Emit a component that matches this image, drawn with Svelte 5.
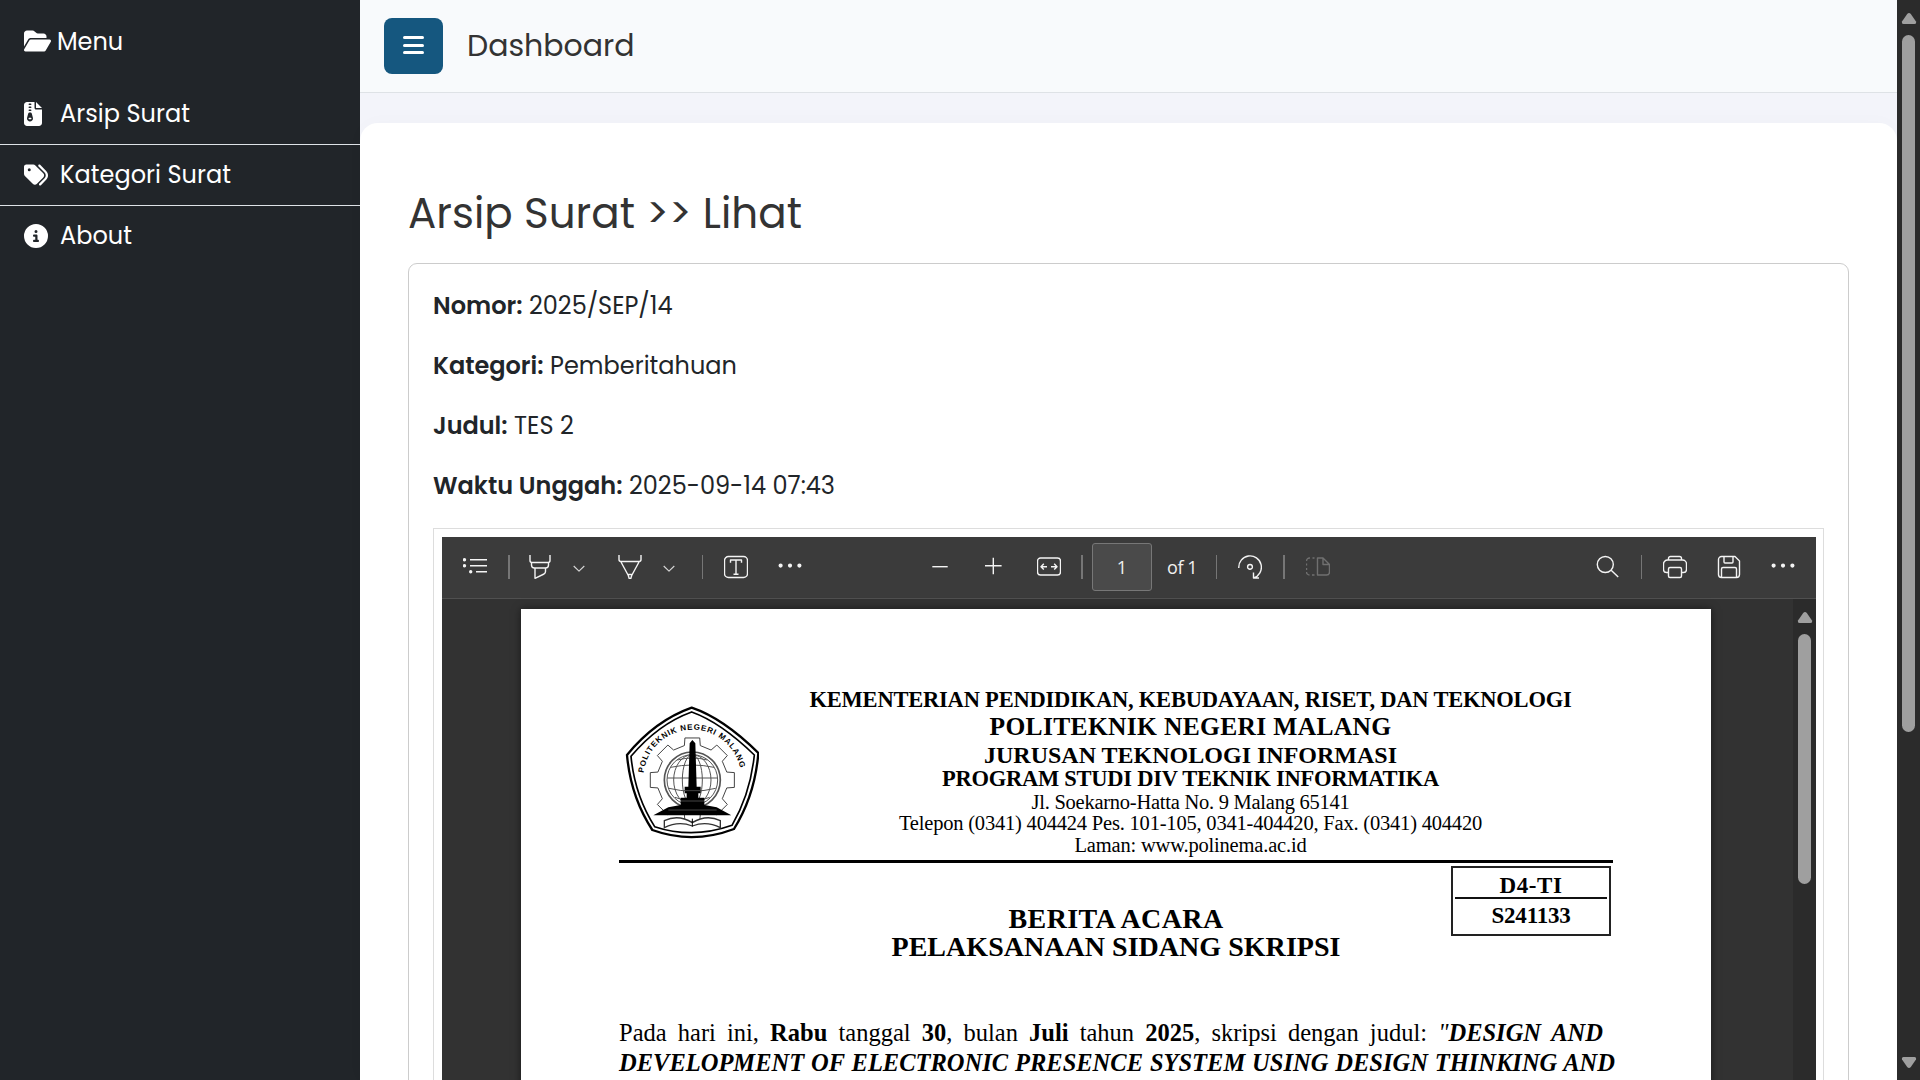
<script>
  // Spreads a line of text over a set width, between letters or between words.
  function fit(node, { width, words = false }) {
    const natural = node.getBoundingClientRect().width;
    const text = node.textContent;
    const slots = words ? text.split(' ').length - 1 : text.length;
    const extra = (width - natural) / slots;
    node.style[words ? 'wordSpacing' : 'letterSpacing'] = `${extra}px`;
  }

  const menu = [
    { label: 'Arsip Surat', width: 130, box: '0 0 384 512', w: 18,
      d: 'M64 0C28.7 0 0 28.7 0 64V448c0 35.3 28.7 64 64 64H320c35.3 0 64-28.7 64-64V160H256c-17.7 0-32-14.3-32-32V0H64zM256 0V128H384L256 0zM96 48c0-8.8 7.2-16 16-16h32c8.8 0 16 7.2 16 16s-7.2 16-16 16H112c-8.8 0-16-7.2-16-16zm0 64c0-8.8 7.2-16 16-16h32c8.8 0 16 7.2 16 16s-7.2 16-16 16H112c-8.8 0-16-7.2-16-16zm0 64c0-8.8 7.2-16 16-16h32c8.8 0 16 7.2 16 16s-7.2 16-16 16H112c-8.8 0-16-7.2-16-16zm-6.3 71.8c3.7-14 16.4-23.8 30.9-23.8h14.8c14.5 0 27.2 9.7 30.9 23.8l23.5 88.2c1.4 5.4 2.1 10.9 2.1 16.4c0 35.2-28.8 63.7-64 63.7s-64-28.5-64-63.7c0-5.5 .7-11.1 2.1-16.4l23.5-88.2zM112 336c-8.8 0-16 7.2-16 16s7.2 16 16 16h32c8.8 0 16-7.2 16-16s-7.2-16-16-16H112z' },
    { label: 'Kategori Surat', width: 171, box: '0 0 512 512', w: 24,
      d: 'M345 39.1L472.8 168.4c52.4 53 52.4 138.2 0 191.2L360.8 472.9c-9.3 9.4-24.5 9.5-33.9 .2s-9.5-24.5-.2-33.9L438.6 325.9c33.9-34.3 33.9-89.4 0-123.7L310.9 72.9c-9.3-9.4-9.2-24.6 .2-33.9s24.6-9.2 33.9 .2zM0 229.5V80C0 53.5 21.5 32 48 32H197.5c17 0 33.3 6.7 45.3 18.7l168 168c25 25 25 65.5 0 90.5L277.3 442.7c-25 25-65.5 25-90.5 0l-168-168C6.7 262.7 0 246.5 0 229.5zM144 144a32 32 0 1 0-64 0 32 32 0 1 0 64 0z' },
    { label: 'About', width: 72, box: '0 0 512 512', w: 24,
      d: 'M256 512A256 256 0 1 0 256 0a256 256 0 1 0 0 512zM216 336h24V272H216c-13.3 0-24-10.7-24-24s10.7-24 24-24h48c13.3 0 24 10.7 24 24v88h8c13.3 0 24 10.7 24 24s-10.7 24-24 24H216c-13.3 0-24-10.7-24-24s10.7-24 24-24zm40-208a32 32 0 1 1 0 64 32 32 0 1 1 0-64z' },
  ];

  const details = [
    { key: 'Nomor:', kw: 89.5, value: '2025/SEP/14', vw: 143.5 },
    { key: 'Kategori:', kw: 110.5, value: 'Pemberitahuan', vw: 187 },
    { key: 'Judul:', kw: 74.5, value: 'TES 2', vw: 60 },
    { key: 'Waktu Unggah:', kw: 189.5, value: '2025-09-14 07:43', vw: 206 },
  ];

  const dots = 'M2.600 10.6h.01M12 10.6h.01M21.400 10.6h.01';
  const chevron = 'M.7 11l5.3 5.2 5.3-5.2';
  // Each tool: its left gap, then an outline icon on a grid 24 units high.
  const tools = [
    { gap: 21, d: 'M7 4.7h17M7 10.8h17M13 16.8h11', dot: 'M1.5 4.7h.01M1.5 10.8h.01M7.7 16.8h.01' },
    { gap: 21, sep: 2 },
    { gap: 18, d: 'M2 0v5.5q0 2 2 2h16q2 0 2-2V0M3.5 8v2q0 3 3 3h11q3 0 3-3V8M7 13v10.3l9-4.3q1.5-1 1.5-2.5V13' },
    { gap: 21, w: 12, thin: true, d: chevron },
    { gap: 33, d: 'M1 0v4.5q0 2 2 2h18q2 0 2-2V0M3 7l7.3 13.5L11.2 23.5h1.6l.9-3L21 7M10.3 19.5h3.4' },
    { gap: 21, w: 12, thin: true, d: chevron },
    { gap: 27, sep: 1 },
    { gap: 21, d: 'M4.5 1.5h15a4 4 0 0 1 4 4v13a4 4 0 0 1-4 4h-15a4 4 0 0 1-4-4v-13a4 4 0 0 1 4-4zM6.5 7.8V5h11v2.8M12 5v14.2M9.5 19.2h5' },
    { gap: 30, dot: dots, big: true },
    { gap: 126, d: 'M4.3 11.7h15.4' },
    { gap: 29, d: 'M4 10.8h16.6M12.3 2.8v16.4' },
    { gap: 31.5, d: 'M3.5 3h17a3 3 0 0 1 3 3v11a3 3 0 0 1-3 3h-17a3 3 0 0 1-3-3V6a3 3 0 0 1 3-3zM4 11.7h6M14 11.7h6M6.8 8.8L4 11.7l2.8 2.9M17.2 8.8l2.8 2.9-2.8 2.9' },
    { gap: 20.5, sep: 2 },
    { gap: 9, input: true },
    { gap: 15, total: true },
    { gap: 19, sep: 1 },
    { gap: 21, d: 'M.8 13A11.3 11.3 0 1 1 15.5 23M15.5 17.5V23H21M12 9.5a2.4 2.4 0 1 1 0 4.8 2.4 2.4 0 1 1 0-4.8' },
    { gap: 21, sep: 2 },
    { gap: 21, dim: true, d: 'M11.5 3h5.5l6.5 6.5V17a3 3 0 0 1-3 3h-9zM17 3v6.5h6.5M8.5 3h-2M4 3H3.500A3 3 0 0 0 .5 6M.5 8.500v2M.5 13v2M.5 17a3 3 0 0 0 3 3M6 20h2.500' },
    { gap: 266, d: 'M9.300 1.500a8 8 0 1 1 0 16 8 8 0 1 1 0-16zM15.200 15.200l7 6.900' },
    { gap: 21, sep: 1 },
    { gap: 21, d: 'M5.500 17.500H3.500a3 3 0 0 1-3-3V9a4 4 0 0 1 4-4h15a4 4 0 0 1 4 4v5.500a3 3 0 0 1-3 3h-2M5.500 5V3.500a2 2 0 0 1 2-2h9a2 2 0 0 1 2 2V5M7 12.500h10a1.500 1.500 0 0 1 1.500 1.500v7a1.500 1.500 0 0 1-1.500 1.500H7A1.500 1.500 0 0 1 5.500 21v-7A1.500 1.500 0 0 1 7 12.500z' },
    { gap: 30, d: 'M4.500 1.500H18L22.500 6v13.500a3 3 0 0 1-3 3h-15a3 3 0 0 1-3-3v-15a3 3 0 0 1 3-3zM7 1.500V7q0 1 1 1h7q1 0 1-1V1.500M4.500 22.500V14q0-1.500 1.500-1.500h12q1.500 0 1.500 1.500v8.500' },
    { gap: 30, dot: dots, big: true },
  ];

  const letterhead = [
    { text: 'KEMENTERIAN PENDIDIKAN, KEBUDAYAAN, RISET, DAN TEKNOLOGI', width: 762, cls: 'l1' },
    { text: 'POLITEKNIK NEGERI MALANG', width: 402, cls: 'l2' },
    { text: 'JURUSAN TEKNOLOGI INFORMASI', width: 413, cls: 'l3' },
    { text: 'PROGRAM STUDI DIV TEKNIK INFORMATIKA', width: 497, cls: 'l4' },
    { text: 'Jl. Soekarno-Hatta No. 9 Malang 65141', width: 318, cls: 'l5' },
    { text: 'Telepon (0341) 404424 Pes. 101-105, 0341-404420, Fax. (0341) 404420', width: 583, cls: 'l6' },
    { text: 'Laman: www.polinema.ac.id', width: 232, cls: 'l6' },
  ];

  // Cog outline with eight teeth behind the globe of the crest.
  const cog = Array.from({ length: 8 }, (_, i) => {
    const at = (deg, r) => {
      const a = ((i * 45 + deg) * Math.PI) / 180;
      return `${(277 + r * Math.cos(a)).toFixed(1)} ${(300 + r * Math.sin(a)).toFixed(1)}`;
    };
    return `${i ? 'L' : 'M'}${at(-13, 106)}L${at(-10, 128)}L${at(10, 128)}L${at(13, 106)}`;
  }).join('') + 'Z';
</script>

<div class="app">
  <aside>
    <div class="brand">
      <svg width="27" height="24" viewBox="0 0 576 512"><path d="M88.700 223.800L0 375.800V96C0 60.700 28.700 32 64 32H181.500c17 0 33.300 6.700 45.300 18.700l26.500 26.500c12 12 28.300 18.700 45.300 18.700H416c35.300 0 64 28.700 64 64v32H144c-22.800 0-43.800 12.100-55.300 31.800zm27.600 16.100C122.100 230 132.600 224 144 224H544c11.500 0 22 6.100 27.700 16.100s5.700 22.200-.1 32.100l-112 192C453.900 474 443.400 480 432 480H32c-11.500 0-22-6.100-27.700-16.100s-5.700-22.200 .1-32.100l112-192z" /></svg>
      <span class="fit" use:fit={{ width: 66 }}>Menu</span>
    </div>
    <nav>
      {#each menu as item}
        <a href="#top">
          <span class="ico"><svg width={item.w} height="24" viewBox={item.box}><path d={item.d} /></svg></span>
          <span class="fit" use:fit={{ width: item.width }}>{item.label}</span>
        </a>
      {/each}
    </nav>
  </aside>

  <main>
    <header>
      <button aria-label="Toggle menu"><i></i><i></i><i></i></button>
      <span class="fit" use:fit={{ width: 167.5 }}>Dashboard</span>
    </header>
    <section class="panel">
      <h1><span class="fit" use:fit={{ width: 394 }}>Arsip Surat &gt;&gt; Lihat</span></h1>
      <div class="card">
        {#each details as row}
          <p><b class="fit" use:fit={{ width: row.kw }}>{row.key}</b><span class="fit" use:fit={{ width: row.vw }}>{row.value}</span></p>
        {/each}
        <div class="frame">
          <div class="toolbar">
            {#each tools as t}
              <div class="tool" class:dim={t.dim} class:thin={t.thin} style:margin-left="{t.gap}px">
                {#if t.sep}
                  <i class="sep" style:width="{t.sep}px"></i>
                {:else if t.input}
                  <span class="page-no">1</span>
                {:else if t.total}
                  <span class="total">of 1</span>
                {:else}
                  <svg width={t.w ?? 24} height="24" viewBox="0 0 {t.w ?? 24} 24">
                    {#if t.d}<path d={t.d} />{/if}
                    {#if t.dot}<path class="dot" class:big={t.big} d={t.dot} />{/if}
                  </svg>
                {/if}
              </div>
            {/each}
          </div>
          <div class="viewer">
            <article>
              <div class="head">
                <svg class="crest" width="134" height="134" viewBox="75 78 402 402">
                  <g fill="none" stroke="#000">
                    <path stroke-width="7" d="M275 83Q370 115 475 219Q465 345 402 447Q278 494 157 450Q92 350 81 225Q165 122 275 83Z" />
                    <path stroke-width="5" d="M275 96Q362 127 463 225Q451 342 396 436Q278 478 164 440Q104 345 93 229Q175 132 275 96Z" />
                    <path stroke="#444" stroke-width="3" d={cog} />
                    <g stroke="#555" stroke-width="3">
                      <circle cx="277" cy="300" r="84" stroke-width="5" />
                      <circle cx="277" cy="300" r="76" />
                      <ellipse cx="277" cy="300" rx="30" ry="76" /><ellipse cx="277" cy="300" rx="56" ry="76" />
                      <path d="M212 262Q277 248 342 262M202 294H352M207 325Q277 342 347 325M225 352Q277 374 329 352M232 240Q277 228 322 240" />
                    </g>
                    <path id="crest-arc" stroke="none" d="M131 279A147 147 0 0 1 423 279" />
                  </g>
                  <path d="M269 190L277 180L286 190L290 320H302V340H295V353H313V375L350 382L394 406H160L205 382L242 375V353H260V340H254V320H265Z" />
                  <path fill="#fff" stroke="#333" stroke-width="4" d="M193 443V422Q235 402 277 428Q320 402 361 422V443Q320 422 277 438Q235 422 193 443Z" />
                  <path stroke="#000" stroke-width="3" d="M277 416V440" />
                  <path stroke="#666" stroke-width="2" d="M242 363H313M254 332H302M205 390H350" />
                  <text><textPath href="#crest-arc" textLength="412">POLITEKNIK NEGERI MALANG</textPath></text>
                </svg>
                <div class="lines">
                  {#each letterhead as l}
                    <div class={l.cls}><span class="fit" use:fit={{ width: l.width }}>{l.text}</span></div>
                  {/each}
                </div>
              </div>
              <div class="rule"></div>
              <div class="title">
                <div class="names">
                  <div><span class="fit" use:fit={{ width: 215 }}>BERITA ACARA</span></div>
                  <div><span class="fit" use:fit={{ width: 449 }}>PELAKSANAAN SIDANG SKRIPSI</span></div>
                </div>
                <div class="stamp">
                  <div class="code"><span class="fit" use:fit={{ width: 63 }}>D4-TI</span></div>
                  <div class="num"><span class="fit" use:fit={{ width: 79 }}>S241133</span></div>
                </div>
              </div>
              <div class="body">
                <div><span class="fit line" use:fit={{ width: 984, words: true }}>Pada hari ini, <b>Rabu</b> tanggal <b>30</b>, bulan <b>Juli</b> tahun <b>2025</b>, skripsi dengan judul: <em>"</em><b><em>DESIGN AND</em></b></span></div>
                <div><span class="fit" use:fit={{ width: 996, words: true }}><b><em>DEVELOPMENT OF ELECTRONIC PRESENCE SYSTEM USING DESIGN THINKING AND</em></b></span></div>
              </div>
            </article>
            <div class="bar inner">
              <svg width="16" height="11" viewBox="0 0 16 11"><path d="M8 0Q9 0 9.800 1L15 8.500Q15.500 11 13.500 11H2.500Q.5 11 1 8.500L6.200 1Q7 0 8 0Z" /></svg>
              <i></i>
            </div>
          </div>
        </div>
      </div>
    </section>
  </main>

  <div class="bar outer">
    <svg width="16" height="11" viewBox="0 0 16 11"><path d="M8 0Q9 0 9.800 1L15 8.500Q15.500 11 13.500 11H2.500Q.5 11 1 8.500L6.200 1Q7 0 8 0Z" /></svg>
    <i></i>
    <svg class="down" width="16" height="11" viewBox="0 0 16 11"><path d="M8 0Q9 0 9.800 1L15 8.500Q15.500 11 13.500 11H2.500Q.5 11 1 8.500L6.200 1Q7 0 8 0Z" /></svg>
  </div>
</div>

<style>
  :global(body) { margin: 0; overflow: hidden; }
  .app { display: flex; width: 1920px; height: 1080px; overflow: hidden; background: #f3f4fa; font: 24px/36px Poppins, Inter, sans-serif; color: #212529; }
  .fit { display: inline-block; white-space: nowrap; }
  svg { display: block; flex: none; }

  aside { width: 360px; flex: none; background: #212529; color: #fff; }
  aside svg { fill: #fff; }
  .brand { display: flex; align-items: flex-start; gap: 6px; height: 83px; padding: 24px 24px 0; box-sizing: border-box; }
  .brand svg { margin-top: 5px; }
  nav a { display: flex; align-items: center; height: 60px; padding: 0 24px; color: #fff; text-decoration: none; border-bottom: 1px solid #dee2e6; }
  nav a:first-child { padding-top: 1px; }
  nav a:last-child { border-bottom: 0; }
  nav svg { position: relative; top: -0.500px; }
  .ico { width: 36px; }

  main { flex: 1; min-width: 0; display: flex; flex-direction: column; }
  header { display: flex; align-items: center; gap: 24px; height: 92px; flex: none; padding-left: 24px; background: #f8fafc; border-bottom: 1px solid #dee2e6; font-size: 30px; color: #333; }
  button { display: flex; flex-direction: column; align-items: center; justify-content: center; gap: 4.500px; width: 59px; height: 56px; padding: 0 0 2px; border: 0; border-radius: 8px; background: #15577f; }
  button i { width: 21px; height: 3px; border-radius: 1.500px; background: #fff; }
  .panel { flex: 1; min-height: 0; margin-top: 30px; padding: 65px 48px 0; background: #fff; border-radius: 18px 18px 0 0; box-shadow: 0 0 20px rgba(60, 60, 120, 0.020); }
  h1 { margin: 0 0 24px; font-size: 42px; line-height: 51px; font-weight: 400; color: #333; }
  .card { height: 900px; padding: 24px 24px 0; border: 1px solid #ccc; border-radius: 9px; }
  p { display: flex; gap: 6.500px; margin: 0 0 24px; }
  p b { font-weight: 600; }

  .frame { height: 700px; padding: 8px 7px 8px 8px; border: 1px solid #ddd; }
  .toolbar { display: flex; align-items: center; height: 60px; padding-bottom: 1px; background: #3b3b3b; border-bottom: 1px solid #505050; }
  .tool { flex: none; color: #f0f0f0; }
  .tool svg { fill: none; stroke: #f4f4f4; stroke-width: 1.400; stroke-linejoin: round; }
  .tool .dot { stroke-width: 3.400; stroke-linecap: round; }
  .tool .big { stroke-width: 4.200; }
  .dim svg { stroke: #707070; }
  .thin svg { stroke: #d8d8d8; stroke-width: 1.100; }
  .sep { display: block; height: 24px; background: #767676; }
  .page-no, .total { display: block; font: 18px/47px 'Open Sans', sans-serif; }
  .page-no { width: 58px; height: 46px; line-height: 47px; text-align: center; border: 1px solid #777; border-radius: 3px; background: #4a4a4a; }
  .total { width: 30px; white-space: nowrap; letter-spacing: -0.400px; }
  .viewer { display: flex; height: 640px; background: #323232; }
  article { width: 994px; margin: 10px 82px 0 79px; padding: 0 98px; background: #fff; color: #000; box-shadow: 0 0 8px rgba(0, 0, 0, 0.500); font-family: 'Liberation Serif', serif; }

  .head { display: grid; grid-template-columns: 148px 847px; height: 250.500px; }
  .crest { margin: 97px 0 0 6px; }
  .crest text { font: bold 24px 'Liberation Sans', sans-serif; }
  .lines { display: flex; flex-direction: column; align-items: center; padding-top: 79.600px; }
  .l1 { font: bold 22.500px/22px 'Liberation Serif', serif; }
  .l2 { margin-top: 3.500px; font: bold 25.500px/25px 'Liberation Serif', serif; }
  .l3 { margin-top: 3.800px; font: bold 24px/24px 'Liberation Serif', serif; }
  .l4 { margin-top: 0.700px; font: bold 22.500px/22px 'Liberation Serif', serif; }
  .l5 { margin-top: 2px; font: 20.500px/20px 'Liberation Serif', serif; }
  .l6 { margin-top: 1.700px; font: 20.500px/20px 'Liberation Serif', serif; }
  .rule { height: 3px; background: #000; }
  .title { display: grid; grid-template-columns: 1fr auto 1fr; }
  .names { grid-column: 2; padding-top: 42px; text-align: center; font: bold 28px/28px 'Liberation Serif', serif; }
  .stamp { box-sizing: border-box; justify-self: end; width: 160px; height: 70px; margin: 3px 2px 0 0; padding: 0 2px; border: 2px solid #222; text-align: center; font: bold 23px/30px 'Liberation Serif', serif; }
  .code { height: 29px; line-height: 35px; border-bottom: 2px solid #111; }
  .num { line-height: 34px; }
  .body { margin-top: 57px; font-size: 24.500px; line-height: 30px; }
  .body div { height: 30px; }

  .bar { display: flex; flex-direction: column; align-items: center; width: 23px; flex: none; background: #2b2b2b; }
  .bar svg { fill: #9f9f9f; }
  .bar i { width: 13px; border-radius: 7px; background: #9f9f9f; }
  .outer svg:first-child { margin-top: 13px; }
  .outer i { height: 697px; margin-top: 11px; }
  .down { margin-top: 325px; transform: rotate(180deg); }
  .inner svg { margin-top: 13px; }
  .inner i { height: 250px; margin-top: 11px; }
</style>
